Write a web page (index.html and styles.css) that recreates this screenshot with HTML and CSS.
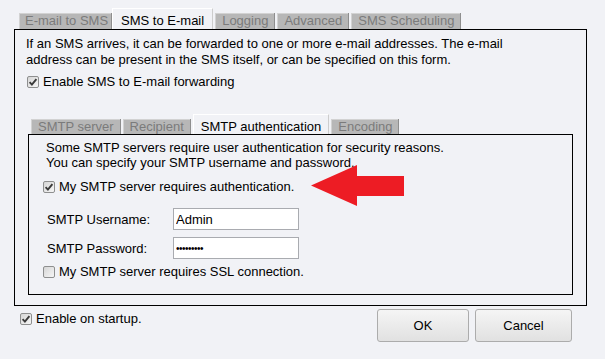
FILE: index.html
```html
<!DOCTYPE html>
<html>
<head>
<meta charset="utf-8">
<link rel="stylesheet" href="styles.css">
</head>
<body>
<div class="dialog">
  <div class="tabs tabs-outer">
    <div class="tab tab-first">E-mail to SMS</div>
    <div class="tab active">SMS to E-mail</div>
    <div class="tab">Logging</div>
    <div class="tab">Advanced</div>
    <div class="tab">SMS Scheduling</div>
  </div>
  <div class="panel panel-outer">
    <p class="desc">If an SMS arrives, it can be forwarded to one or more e-mail addresses. The e-mail<br>address can be present in the SMS itself, or can be specified on this form.</p>
    <label class="check check-forward"><span class="box"><svg viewBox="0 0 10 10"><path d="M1.6 5.2 L3.9 7.6 L8.4 2.2"/></svg></span>Enable SMS to E-mail forwarding</label>
    <div class="subtabs">
      <div class="tabs tabs-inner">
        <div class="tab">SMTP server</div>
        <div class="tab">Recipient</div>
        <div class="tab active">SMTP authentication</div>
        <div class="tab">Encoding</div>
      </div>
      <div class="panel panel-inner">
        <p class="desc desc-inner">Some SMTP servers require user authentication for security reasons.<br>You can specify your SMTP username and password.</p>
        <label class="check check-auth"><span class="box"><svg viewBox="0 0 10 10"><path d="M1.6 5.2 L3.9 7.6 L8.4 2.2"/></svg></span>My SMTP server requires authentication.</label>
        <div class="field field-user"><span class="field-label">SMTP Username:</span><input class="field-input" type="text" value="Admin"></div>
        <div class="field field-pass"><span class="field-label">SMTP Password:</span><input class="field-input field-secret" type="password" value="123456789"></div>
        <label class="check check-ssl"><span class="box box-empty"></span>My SMTP server requires SSL connection.</label>
      </div>
    </div>
  </div>
  <div class="footer">
    <label class="check check-startup"><span class="box"><svg viewBox="0 0 10 10"><path d="M1.6 5.2 L3.9 7.6 L8.4 2.2"/></svg></span>Enable on startup.</label>
    <div class="buttons">
      <button class="btn btn-ok">OK</button>
      <button class="btn btn-cancel">Cancel</button>
    </div>
  </div>
</div>
<svg class="arrow" viewBox="0 0 93 41" width="93" height="41"><polygon points="0,20.5 46,0 46,11 93,11 93,31 46,31 46,41"/></svg>
</body>
</html>
```

FILE: styles.css
```css
* { box-sizing: border-box; }

body {
  margin: 0;
  width: 605px;
  height: 359px;
  overflow: hidden;
  position: relative;
  background: #f1f2f6;
  color: #000;
  font-family: "Liberation Sans", Arial, sans-serif;
  font-size: 13px;
  line-height: 16px;
}

.dialog {
  width: 573px;
  margin-left: 14px;
  padding-top: 8px;
}

.tabs {
  display: flex;
  align-items: flex-end;
}

.tabs-outer {
  height: 21px;
  padding-left: 5px;
}

.tabs-inner {
  height: 20px;
  padding-left: 3px;
}

.tab {
  white-space: nowrap;
  background: #b7b7b7;
  color: #7b7b7b;
  padding: 0 7px;
  margin-right: 2px;
  height: 16px;
  line-height: 16px;
  box-shadow: inset -1px 0 #8e8e8e, inset 1px 1px #d2d2d2;
}

.tabs-inner .tab {
  height: 15px;
  line-height: 15px;
}

.tab-first {
  padding: 0 4px 0 6px;
  margin-right: 0;
}

.tab.active {
  background: #f1f2f6;
  color: #000;
  height: 21px;
  padding: 4px 8px 0;
  border: 1px solid #ffffff;
  border-right-color: #cdcdcd;
  border-bottom: none;
  box-shadow: none;
}

.tabs-inner .tab.active {
  height: 20px;
  padding: 4px 7px 0;
}

.panel {
  border: 1px solid #000;
}

.panel-outer {
  height: 277px;
  padding: 6px 13px 0 11px;
}

.desc {
  margin: 0;
  white-space: nowrap;
  line-height: 16px;
}

.desc-inner {
  margin-left: 3px;
  line-height: 15px;
}

.check {
  display: flex;
  align-items: center;
  gap: 4px;
  height: 16px;
  white-space: nowrap;
}

.box {
  flex: none;
  width: 12px;
  height: 12px;
  border: 1px solid #8e8f8f;
  border-radius: 2px;
  background: linear-gradient(135deg, #d6d6d6, #f6f6f6);
  display: flex;
  align-items: center;
  justify-content: center;
}

.box svg {
  width: 10px;
  height: 10px;
}

.box path {
  fill: none;
  stroke: #3a3a3a;
  stroke-width: 1.9;
}

.check-forward {
  margin-top: 6px;
  padding-left: 1px;
}

.subtabs {
  margin: 24px 0 0 2px;
}

.panel-inner {
  height: 161px;
  padding: 5px 0 0 14px;
}

.check-auth {
  margin-top: 9px;
}

.field {
  display: flex;
  align-items: center;
  margin-left: 4px;
  height: 22px;
}

.field-user {
  margin-top: 13px;
}

.field-pass {
  margin-top: 7px;
}

.field-label {
  width: 126px;
  padding-top: 2px;
}

.field-input {
  width: 126px;
  height: 22px;
  margin: 0;
  padding: 0 2px;
  border: 1px solid #a9abb0;
  background: #fff;
  font-family: "Liberation Sans", Arial, sans-serif;
  font-size: 13px;
  color: #000;
  outline: none;
}

.field-secret {
  font-size: 10px;
  letter-spacing: -0.5px;
}

.check-ssl {
  margin-top: 5px;
}

.footer {
  display: flex;
  justify-content: space-between;
  align-items: flex-start;
  margin-top: 3px;
  padding: 0 15px 0 6px;
}

.check-startup {
  margin-top: 2px;
}

.buttons {
  display: flex;
  gap: 6px;
}

.btn {
  height: 33px;
  border: 1px solid #acacac;
  border-radius: 3px;
  background: linear-gradient(#f5f5f5, #e1e1e1);
  font-family: "Liberation Sans", Arial, sans-serif;
  font-size: 13px;
  color: #000;
  padding: 0;
}

.btn-ok {
  width: 92px;
}

.btn-cancel {
  width: 97px;
}

.arrow {
  position: absolute;
  left: 311px;
  top: 165px;
}

.arrow polygon {
  fill: #ed1c24;
}
```
